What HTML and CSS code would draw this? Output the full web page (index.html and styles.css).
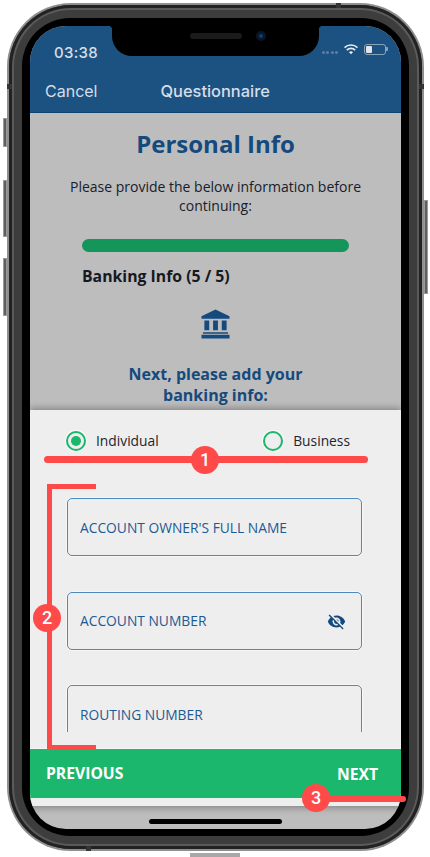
FILE: index.html
```html
<!DOCTYPE html>
<html lang="en">
<head>
<meta charset="utf-8">
<title>Questionnaire</title>
<link rel="stylesheet" href="styles.css">
</head>
<body>
<div class="device">
  <span class="btn btn-mute"></span>
  <span class="btn btn-up"></span>
  <span class="btn btn-down"></span>
  <span class="btn btn-power"></span>
  <span class="btn btn-port"></span>
  <div class="edge">
    <div class="band">
      <span class="antenna antenna-top"></span>
      <span class="antenna antenna-left"></span>
      <span class="antenna antenna-right"></span>
      <span class="antenna antenna-bottom"></span>
      <div class="bezel">
        <div class="screen">
          <div class="notch">
            <span class="speaker"></span>
            <span class="camera"></span>
          </div>
          <header class="header">
            <div class="status">
              <span class="time">03:38</span>
              <div class="status-icons">
                <span class="signal"><i></i><i></i><i></i><i></i></span>
                <svg class="wifi" viewBox="0 0 16 13" aria-hidden="true"><path d="M8 12.6 5.7 10.2a3.3 3.3 0 0 1 4.6 0zM3.9 8.4 2.6 7a7.7 7.7 0 0 1 10.8 0l-1.3 1.4a5.8 5.8 0 0 0-8.2 0zM1.2 5.6 0 4.3a11.5 11.5 0 0 1 16 0l-1.2 1.3a9.7 9.7 0 0 0-13.6 0z"/></svg>
                <span class="battery"><span class="battery-level"></span></span>
              </div>
            </div>
            <nav class="nav">
              <span class="cancel">Cancel</span>
              <span class="nav-title">Questionnaire</span>
            </nav>
          </header>
          <section class="intro">
            <h1 class="title">Personal Info</h1>
            <p class="lead">Please provide the below information before continuing:</p>
            <div class="progress"></div>
            <div class="step">Banking Info (5 / 5)</div>
            <svg class="bank" viewBox="0 0 30 30" aria-hidden="true"><path d="M15 0 29.500 7V9.500H.5V7zM3.500 11.500H8.500V21.500H3.500zM12.500 11.500H17.500V21.500H12.500zM21.500 11.500H26.500V21.500H21.500zM2 23.500H28V25H2zM.5 26H29.500V30H.5z"/></svg>
            <h2 class="prompt">Next, please add your<br>banking info:</h2>
          </section>
          <section class="sheet">
            <div class="radios">
              <label class="radio"><span class="dot dot-on"></span>Individual</label>
              <label class="radio"><span class="dot"></span>Business</label>
            </div>
            <div class="fields">
              <div class="field">ACCOUNT OWNER'S FULL NAME</div>
              <div class="field">ACCOUNT NUMBER
                <svg class="eye" viewBox="0 0 24 24" aria-hidden="true"><path d="M12 7c2.760 0 5 2.240 5 5 0 .65-.13 1.260-.36 1.830l2.920 2.920c1.510-1.260 2.700-2.890 3.430-4.750-1.730-4.390-6-7.500-11-7.500-1.400 0-2.740.25-3.980.7l2.160 2.160C10.740 7.130 11.350 7 12 7zM2 4.270l2.280 2.280.46.46C3.080 8.300 1.780 10.020 1 12c1.730 4.390 6 7.500 11 7.500 1.550 0 3.030-.3 4.380-.84l.42.42L19.730 22 21 20.730 3.270 3 2 4.270zM7.530 9.800l1.550 1.550c-.05.21-.08.43-.08.65 0 1.660 1.340 3 3 3 .22 0 .44-.03.65-.08l1.550 1.550c-.67.33-1.410.53-2.200.53-2.760 0-5-2.240-5-5 0-.79.2-1.530.53-2.200zm4.310-.78l3.150 3.150.02-.16c0-1.660-1.340-3-3-3l-.17.01z"/></svg>
              </div>
              <div class="field">ROUTING NUMBER</div>
            </div>
            <footer class="actions">
              <span class="prev">PREVIOUS</span>
              <span class="next">NEXT</span>
            </footer>
          </section>
          <div class="home"><span class="home-bar"></span></div>
        </div>
      </div>
    </div>
  </div>
  <span class="mark mark-line1"></span>
  <span class="mark-num num1">1</span>
  <span class="bracket"></span>
  <span class="mark-num num2">2</span>
  <span class="mark mark-line3"></span>
  <span class="mark-num num3">3</span>
</div>
</body>
</html>
```
FILE: styles.css
```css
* { box-sizing: border-box; }
html, body { margin: 0; background: #fff; }
body { width: 430px; height: 857px; overflow: hidden; font-family: "Open Sans", sans-serif; }

/* device */
.device { position: relative; width: 417px; height: 848px; margin: 3px 0 0 7px; }
.edge { height: 100%; padding: 2px; border-radius: 64px; background: #8f8f8f; }
.band { position: relative; height: 100%; padding: 13px; border-radius: 62px;
  background: #3d3d3d; box-shadow: inset 0 0 0 3px #222, inset 0 0 0 5px #5a5a5a; }
.bezel { height: 100%; padding: 8px 8px 7px; border-radius: 48px; background: #000; }
.screen { position: relative; display: flex; flex-direction: column; height: 100%; overflow: hidden;
  border-radius: 36px; background: #bdbdbd; }
.btn { position: absolute; background: #5e5e5e; border: 1px solid #9a9a9a; }
.btn-mute { left: -4px; top: 115px; width: 4px; height: 29px; }
.btn-up { left: -4px; top: 177px; width: 4px; height: 57px; }
.btn-down { left: -4px; top: 255px; width: 4px; height: 58px; }
.btn-power { right: -4px; top: 197px; width: 4px; height: 94px; }
.btn-port { left: 183px; bottom: -6px; width: 50px; height: 4px; background: #a8a8a8; border: 0; }
.antenna { position: absolute; background: #333; }
.antenna-top { left: 327px; top: -2px; width: 5px; height: 5px; }
.antenna-left { left: -2px; top: 79px; width: 5px; height: 5px; }
.antenna-right { right: -2px; top: 79px; width: 5px; height: 5px; }
.antenna-bottom { left: 77px; bottom: -2px; width: 5px; height: 5px; }

/* notch */
.notch { position: absolute; left: 82px; top: 0; width: 207px; height: 30px; background: #000;
  border-radius: 0 0 20px 20px; }
.notch::before, .notch::after { content: ""; position: absolute; top: 0; width: 4px; height: 4px; }
.notch::before { left: -4px; background: radial-gradient(circle at 0 100%, transparent 4px, #000 4.500px); }
.notch::after { right: -4px; background: radial-gradient(circle at 100% 100%, transparent 4px, #000 4.500px); }
.speaker { position: absolute; left: 78px; top: 7px; width: 52px; height: 6px; border-radius: 3px; background: #1b1b1b; }
.camera { position: absolute; left: 144px; top: 5px; width: 10px; height: 10px; border-radius: 50%;
  background: #0c3f86; border: 3px solid #0a1526; }

/* header */
.header { height: 87px; flex: none; background: #1c5282; border-bottom: 1px solid #0f4472; color: #d5dee6; }
.status { display: flex; justify-content: space-between; align-items: center; height: 40px; padding: 14px 14px 0 24px; }
.time { font: 500 15px/20px Inter, sans-serif; letter-spacing: .3px; }
.status-icons { display: flex; align-items: center; gap: 6px; margin-top: -8px; }
.signal { display: flex; gap: 1.500px; margin-top: 7px; }
.signal i { width: 3px; height: 3px; border-radius: 50%; background: #5d7f9f; }
.wifi { width: 14px; height: 12px; fill: #e6edf2; }
.battery { position: relative; display: block; width: 22px; height: 11px; margin-right: 1px; padding: 1px;
  border: 1px solid #8aa3b9; border-radius: 3px; }
.battery::after { content: ""; position: absolute; right: -3px; top: 2.500px; width: 2px; height: 4px; background: #8aa3b9; border-radius: 0 1px 1px 0; }
.battery-level { display: block; width: 6px; height: 100%; background: #dfe5ea; border-radius: 1px; }
.nav { position: relative; display: flex; align-items: center; height: 46px; padding: 3px 0 0 15px; }
.cancel { font: 400 16px/20px Inter, sans-serif; }
.nav-title { margin-left: 63px; font: 500 16.400px/20px Inter, sans-serif; }

/* intro */
.intro { height: 297px; flex: none; padding-top: 15px; text-align: center; }
.title { margin: 0; font: 700 24px/32px "Open Sans", sans-serif; color: #154a7e; }
.lead { width: 300px; margin: 17px auto 0; font: 400 14px/19px "Open Sans", sans-serif; color: #16202c; }
.progress { height: 13px; margin: 24px 52px 0; border-radius: 7px; background: #14965a; }
.step { margin: 13px 52px 0; text-align: left; font: 700 15.800px/22px "Open Sans", sans-serif; color: #16191f; }
.bank { display: block; width: 29px; height: 30px; margin: 22px auto 0; fill: #154a7e; }
.prompt { margin: 25px 0 0; font: 700 16px/21px "Open Sans", sans-serif; color: #154a7e; }

/* sheet */
.sheet { position: relative; z-index: 1; display: flex; flex-direction: column; height: 396px; flex: none;
  background: #eee; box-shadow: 0 -3px 6px rgba(0,0,0,.22), 0 3px 6px rgba(0,0,0,.22); }
.radios { display: flex; justify-content: space-between; height: 60px; padding: 21px 51px 0 36px; }
.radio { display: flex; align-items: center; gap: 10px; height: 19px; font: 400 13.800px/17px "Open Sans", sans-serif; color: #1d2530; }
.dot { display: flex; align-items: center; justify-content: center; width: 20px; height: 20px; border: 2px solid #1ab76c; border-radius: 50%; box-shadow: 0 0 0 1px #fafafa; }
.dot-on::after { content: ""; width: 10px; height: 10px; border-radius: 50%; background: #1ab76c; }
.fields { height: 262px; flex: none; overflow: hidden; padding: 28px 39px 0 37px; }
.field { position: relative; display: flex; align-items: center; justify-content: space-between; height: 58px; margin-bottom: 35.500px;
  padding: 1px 15px 0 12px; border: 1.500px solid #4f88bd; border-radius: 5px; box-shadow: 0 0 0 .5px #fff;
  font: 400 13.800px/20px "Open Sans", sans-serif; color: #1c5a94; }
.eye { width: 19px; height: 19px; fill: #154a7e; }
.actions { display: flex; justify-content: space-between; align-items: center; height: 50px; flex: none; margin-top: 16px;
  padding: 0 23px 0 16px; background: #1ab76c; border-top: 1px solid #f7f7f7; color: #fff;
  font: 700 15.700px/20px "Open Sans", sans-serif; }
.prev { margin-top: -2px; }

/* home */
.home { flex: 1; display: flex; justify-content: center; padding-top: 13px; }
.home-bar { width: 133px; height: 5px; border-radius: 3px; background: #000; }

/* annotation marks */
.mark, .bracket, .mark-num { z-index: 2; }
.mark, .bracket { position: absolute; }
.mark { background: #ff4a4a; border-radius: 4px; }
.mark-line1 { left: 37px; top: 453px; width: 324px; height: 7px; }
.mark-line3 { left: 309px; top: 793px; width: 90px; height: 6px; }
.bracket { left: 40px; top: 481px; width: 49px; height: 266px; border: 5px solid #ff4a4a; border-right: 0; }
.mark-num { position: absolute; display: flex; align-items: center; justify-content: center; width: 28px; height: 28px;
  border-radius: 50%; background: #ff4a4a; color: #fff; font: 500 18px/28px Roboto, sans-serif; }
.num1 { left: 184px; top: 443px; }
.num2 { left: 26px; top: 601px; }
.num3 { left: 295px; top: 781px; }
```
